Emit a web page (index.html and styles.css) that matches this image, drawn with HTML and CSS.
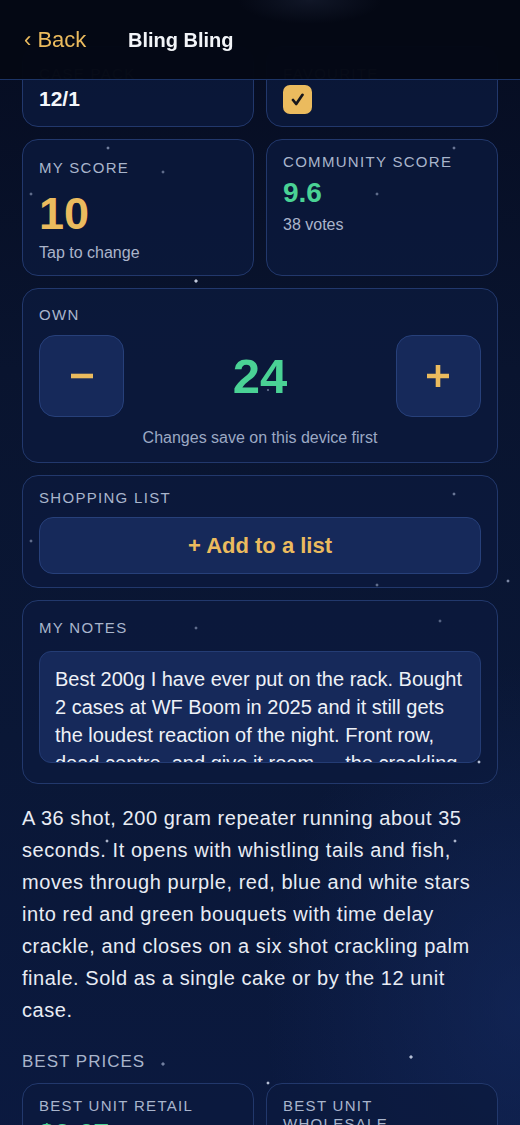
FILE: index.html
```html
<!DOCTYPE html>
<html lang="en">
<head>
    <meta charset="UTF-8">
    <meta name="viewport" content="width=device-width, initial-scale=1.0">
    <title>Bling Bling</title>
    <link rel="stylesheet" href="styles.css">
</head>
<body>
    <header class="topbar">
        <button class="back">‹ Back</button>
        <h1 class="title">Bling Bling</h1>
    </header>

    <main class="page">
        <div class="pair">
            <div class="card card-info">
                <div class="label">CASE PACK</div>
                <div class="info-value"><span class="pack">12/1</span></div>
            </div>
            <div class="card card-info">
                <div class="label">FAVOURITE</div>
                <div class="info-value">
                    <span class="check">
                        <svg width="13" height="13" viewBox="0 0 13 13"><path d="M2 7l3.2 4L11.5 1.8" fill="none" stroke="#17171c" stroke-width="2.7" stroke-linecap="round" stroke-linejoin="round"/></svg>
                    </span>
                </div>
            </div>
        </div>

        <div class="pair">
            <button class="card card-myscore">
                <div class="label">MY SCORE</div>
                <div class="score-big">10</div>
                <div class="hint">Tap to change</div>
            </button>
            <div class="card card-community">
                <div class="label">COMMUNITY SCORE</div>
                <div class="score-green">9.6</div>
                <div class="hint">38 votes</div>
            </div>
        </div>

        <section class="card card-own">
            <div class="label">OWN</div>
            <div class="counter">
                <button class="step" aria-label="Decrease">
                    <svg width="24" height="24" viewBox="0 0 24 24"><path d="M1 12h22" stroke="#ebbb5e" stroke-width="4.6"/></svg>
                </button>
                <span class="count">24</span>
                <button class="step" aria-label="Increase">
                    <svg width="24" height="24" viewBox="0 0 24 24"><path d="M1 12h22M12 1v22" stroke="#ebbb5e" stroke-width="4.6"/></svg>
                </button>
            </div>
            <div class="save-note">Changes save on this device first</div>
        </section>

        <section class="card card-shop">
            <div class="label">SHOPPING LIST</div>
            <button class="add-list">+ Add to a list</button>
        </section>

        <section class="card card-notes">
            <div class="label">MY NOTES</div>
            <div class="notes-box">Best 200g I have ever put on the rack. Bought 2 cases at WF Boom in 2025 and it still gets the loudest reaction of the night. Front row, dead centre, and give it room — the crackling palm finale fills the whole sky.</div>
        </section>

        <p class="description">A 36 shot, 200 gram repeater running about 35 seconds. It opens with whistling tails and fish, moves through purple, red, blue and white stars into red and green bouquets with time delay crackle, and closes on a six shot crackling palm finale. Sold as a single cake or by the 12 unit case.</p>

        <h2 class="section-title">BEST PRICES</h2>
        <div class="pair">
            <div class="card card-price">
                <div class="label">BEST UNIT RETAIL</div>
                <div class="score-green">$0.67</div>
            </div>
            <div class="card card-price">
                <div class="label">BEST UNIT WHOLESALE</div>
                <div class="score-green">$0.52</div>
            </div>
        </div>
    </main>

    <div class="stars"></div>
</body>
</html>
```

FILE: styles.css
```css
html {
    scrollbar-width: none;
}
body {
    margin: 0;
    font-family: 'Liberation Sans', Arial, sans-serif;
    color: #e8ecf4;
    background:
        radial-gradient(ellipse 70% 40% at 100% 82%, rgba(22, 44, 100, 0.55), transparent 70%),
        linear-gradient(180deg, #060c20 0%, #09142f 30%, #0a1736 60%, #0b1a42 100%);
    min-height: 100vh;
}
button {
    font-family: inherit;
    cursor: pointer;
}
.topbar {
    position: fixed;
    top: 0;
    left: 0;
    right: 0;
    height: 79px;
    z-index: 3;
    display: flex;
    align-items: center;
    padding: 0 24px;
    gap: 24px;
    background:
        radial-gradient(ellipse 90px 30px at 310px 0, rgba(40, 50, 75, 0.35), transparent 80%),
        rgba(4, 8, 20, 0.985);
    border-bottom: 1px solid #1c3466;
}
.back {
    min-width: 80px;
    padding: 0;
    text-align: left;
    background: none;
    border: none;
    color: #ebbb5e;
    font-size: 22px;
    line-height: 26px;
}
.title {
    margin: 0;
    font-size: 20px;
    line-height: 26px;
    font-weight: 700;
    color: #f2f4f8;
}
.page {
    padding: 46px 22px 40px;
    display: flex;
    flex-direction: column;
    gap: 12px;
}
.pair {
    display: grid;
    grid-template-columns: 1fr 1fr;
    gap: 12px;
}
.card {
    background: rgba(12, 26, 62, 0.78);
    border: 1px solid #22386c;
    border-radius: 16px;
    padding: 16px;
    text-align: left;
    color: inherit;
    font-family: inherit;
}
.label {
    font-size: 15px;
    line-height: 18px;
    letter-spacing: 1.3px;
    color: #a9b5cc;
}
.card-info {
    padding: 18px 16px 12px;
}
.card-info .label {
    margin-bottom: 1px;
}
.info-value {
    height: 30px;
    display: flex;
    align-items: center;
}
.pack {
    font-size: 21px;
    font-weight: 700;
    color: #f4f6fa;
}
.check {
    width: 29px;
    height: 29px;
    border-radius: 7px;
    background: #ebbb5e;
    display: flex;
    align-items: center;
    justify-content: center;
}
.card-myscore {
    padding: 19px 16px 12px;
    display: block;
    width: 100%;
}
.card-myscore .label {
    margin-bottom: 15px;
}
.score-big {
    font-size: 45px;
    line-height: 44px;
    font-weight: 700;
    color: #ebbb5e;
    margin-bottom: 7px;
}
.hint {
    font-size: 16px;
    line-height: 20px;
    color: #aab4ca;
}
.card-community {
    padding-top: 13px;
}
.score-green {
    font-size: 28px;
    line-height: 30px;
    font-weight: 700;
    color: #4ad295;
    margin: 7px 0;
}
.card-own {
    padding: 17px 16px 15px;
}
.counter {
    margin: 11px 0 12px;
    display: flex;
    align-items: center;
    justify-content: space-between;
}
.step {
    width: 85px;
    height: 82px;
    border-radius: 16px;
    background: #16295a;
    border: 1px solid #27407a;
    display: flex;
    align-items: center;
    justify-content: center;
}
.count {
    font-size: 49px;
    font-weight: 700;
    color: #4ad295;
}
.save-note {
    text-align: center;
    font-size: 16px;
    line-height: 18px;
    color: #9ca9c4;
}
.card-shop {
    padding: 13px 16px;
}
.add-list {
    margin-top: 10px;
    width: 100%;
    height: 57px;
    border-radius: 14px;
    background: #16295a;
    border: 1px solid #27407a;
    color: #ebbb5e;
    font-size: 22px;
    font-weight: 700;
}
.card-notes {
    padding: 18px 16px 20px;
}
.notes-box {
    margin-top: 14px;
    height: 84px;
    overflow: hidden;
    padding: 13px 15px 13px;
    border-radius: 12px;
    background: #16295a;
    border: 1px solid #243c74;
    font-size: 20px;
    line-height: 28px;
    color: #eef1f7;
}
.description {
    margin: 6px 0 0;
    font-size: 20px;
    line-height: 32px;
    letter-spacing: 0.55px;
    color: #e8ecf4;
}
.section-title {
    margin: 14px 0 -1px;
    font-size: 17px;
    line-height: 20px;
    font-weight: 400;
    letter-spacing: 1px;
    color: #a9b5cc;
}
.card-price {
    padding-top: 13px;
}
.card-price .score-green {
    margin-top: 4px;
}
.stars {
    position: fixed;
    inset: 0;
    z-index: 2;
    pointer-events: none;
    background:
        radial-gradient(circle at 108px 148px, rgba(200, 212, 240, 0.55) 0 1px, transparent 1.8px),
        radial-gradient(circle at 163px 172px, rgba(200, 212, 240, 0.45) 0 1px, transparent 1.8px),
        radial-gradient(circle at 31px 194px, rgba(200, 212, 240, 0.45) 0 1px, transparent 1.8px),
        radial-gradient(circle at 454px 148px, rgba(200, 212, 240, 0.5) 0 1px, transparent 1.8px),
        radial-gradient(circle at 377px 194px, rgba(200, 212, 240, 0.45) 0 1px, transparent 1.8px),
        radial-gradient(circle at 196px 281px, rgba(225, 232, 250, 0.85) 0 1.2px, transparent 2px),
        radial-gradient(circle at 268px 390px, rgba(200, 212, 240, 0.4) 0 1px, transparent 1.6px),
        radial-gradient(circle at 454px 494px, rgba(200, 212, 240, 0.5) 0 1px, transparent 1.8px),
        radial-gradient(circle at 31px 541px, rgba(200, 212, 240, 0.45) 0 1px, transparent 1.8px),
        radial-gradient(circle at 377px 585px, rgba(200, 212, 240, 0.45) 0 1px, transparent 1.8px),
        radial-gradient(circle at 508px 581px, rgba(200, 212, 240, 0.6) 0 1px, transparent 1.8px),
        radial-gradient(circle at 196px 628px, rgba(200, 212, 240, 0.45) 0 1px, transparent 1.8px),
        radial-gradient(circle at 440px 621px, rgba(200, 212, 240, 0.4) 0 1px, transparent 1.8px),
        radial-gradient(circle at 479px 762px, rgba(225, 232, 250, 0.8) 0 1px, transparent 1.8px),
        radial-gradient(circle at 107px 841px, rgba(225, 232, 250, 0.75) 0 1px, transparent 1.8px),
        radial-gradient(circle at 455px 841px, rgba(225, 232, 250, 0.75) 0 1px, transparent 1.8px),
        radial-gradient(circle at 338px 918px, rgba(225, 232, 250, 0.75) 0 1px, transparent 1.8px),
        radial-gradient(circle at 163px 1064px, rgba(200, 212, 240, 0.55) 0 1.2px, transparent 2px),
        radial-gradient(circle at 411px 1057px, rgba(225, 232, 250, 0.8) 0 1.2px, transparent 2px),
        radial-gradient(circle at 268px 1083px, rgba(225, 232, 250, 0.8) 0 1px, transparent 1.8px);
}
```
